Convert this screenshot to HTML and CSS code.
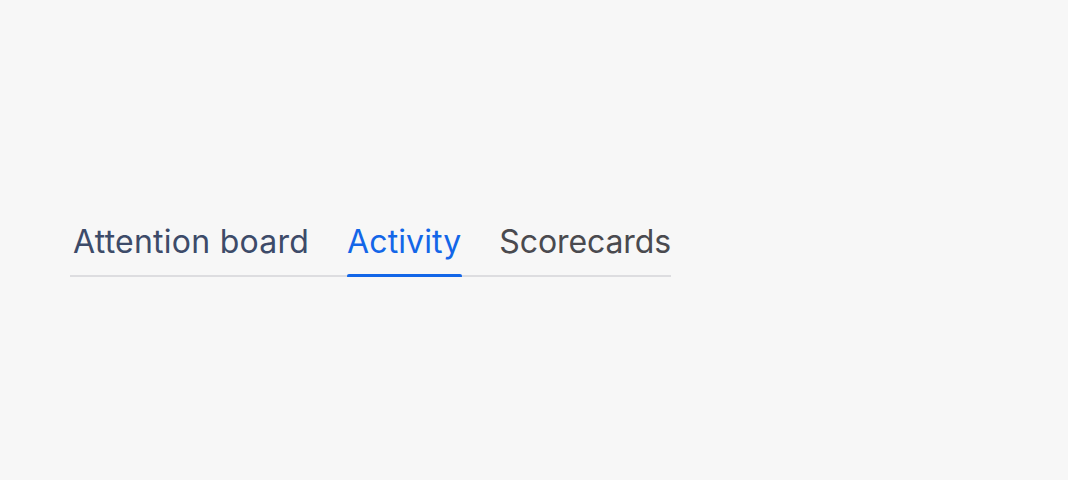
FILE: index.html
```html
<!DOCTYPE html>
<html>
<head>
<meta charset="utf-8">
<link rel="stylesheet" href="styles.css">
</head>
<body>
<div class="page">
  <nav class="tabs">
    <a class="tab tab-slate">Attention board</a>
    <a class="tab tab-active">Activity</a>
    <a class="tab tab-gray">Scorecards</a>
  </nav>
</div>
</body>
</html>
```
FILE: styles.css
```css
html, body {
  margin: 0;
  padding: 0;
  background: #f7f7f7;
}
.page {
  padding: 220px 0 0 70px;
}
.tabs {
  display: flex;
  gap: 36px;
  width: 601px;
  border-bottom: 2px solid #dddde0;
  font-family: Inter, "Noto Sans", sans-serif;
  font-size: 32px;
  letter-spacing: 0.25px;
}
.tab {
  display: block;
  padding: 2px 2px 13px;
  line-height: 40px;
  position: relative;
  white-space: nowrap;
}
.tab-slate { color: #3d4b69; padding-left: 3px; }
.tab-gray { color: #4a4a4f; letter-spacing: -0.1px; margin-left: -1px; }
.tab-active {
  color: #1366e8;
  padding-left: 0;
  padding-right: 1px;
  letter-spacing: 0.1px;
}
.tab-active::after {
  content: "";
  position: absolute;
  left: 0;
  right: 0;
  bottom: -3px;
  height: 4px;
  border-radius: 2px;
  background: #1366e8;
}
```
